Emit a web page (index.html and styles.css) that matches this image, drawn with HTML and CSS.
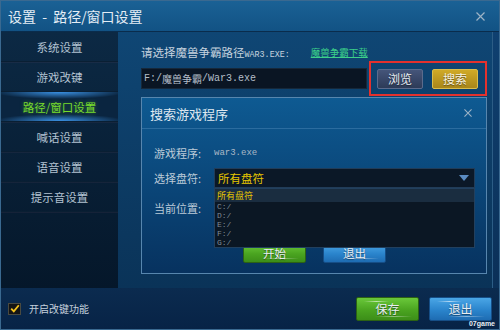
FILE: index.html
```html
<!DOCTYPE html>
<html lang="zh-CN">
<head>
<meta charset="utf-8">
<title>设置 - 路径/窗口设置</title>
<link rel="stylesheet" href="styles.css">
</head>
<body>
<div class="window">
  <header class="titlebar">
    <span class="title">设置 - 路径/窗口设置</span>
    <svg class="close" width="9" height="9" viewBox="0 0 9 9"><path d="M0.5 0.5L8.5 8.5M8.5 0.5L0.5 8.5"/></svg>
  </header>
  <div class="content">
    <nav class="sidebar">
      <div class="nav-item">系统设置</div>
      <div class="nav-item">游戏改键</div>
      <div class="nav-item active">路径/窗口设置</div>
      <div class="nav-item">喊话设置</div>
      <div class="nav-item">语音设置</div>
      <div class="nav-item">提示音设置</div>
    </nav>
    <main class="main">
      <div class="path-label">
        <span>请选择魔兽争霸路径<span class="mono">WAR3.EXE:</span></span>
        <a class="link">魔兽争霸下载</a>
      </div>
      <div class="path-row">
        <div class="path-input"><span class="mono">F:/</span>魔兽争霸<span class="mono">/War3.exe</span></div>
        <div class="highlight">
          <button class="btn btn-slate">浏览</button>
          <button class="btn btn-gold">搜索</button>
        </div>
      </div>
      <section class="dialog">
        <div class="dialog-head">
          <span class="dialog-title">搜索游戏程序</span>
          <svg class="close small" width="9" height="9" viewBox="0 0 9 9"><path d="M0.5 0.5L8.5 8.5M8.5 0.5L0.5 8.5"/></svg>
        </div>
        <div class="dialog-body">
          <div class="field">
            <span class="field-label">游戏程序:</span>
            <span class="mono value">war3.exe</span>
          </div>
          <div class="field gap-small">
            <span class="field-label">选择盘符:</span>
            <div class="select">
              <span class="select-text">所有盘符</span>
              <svg class="caret" width="10" height="6" viewBox="0 0 10 6"><path d="M0 0H10L5 6Z"/></svg>
              <ul class="dropdown">
                <li class="opt selected">所有盘符</li>
                <li class="opt">C:/</li>
                <li class="opt">D:/</li>
                <li class="opt">E:/</li>
                <li class="opt">F:/</li>
                <li class="opt">G:/</li>
              </ul>
            </div>
          </div>
          <div class="field gap-mid">
            <span class="field-label">当前位置:</span>
          </div>
          <div class="dialog-actions">
            <button class="btn btn-green btn-sm">开始</button>
            <button class="btn btn-blue btn-sm">退出</button>
          </div>
        </div>
      </section>
    </main>
    <div class="edge"></div>
  </div>
  <footer class="footer">
    <label class="check">
      <span class="box"><svg width="10" height="9" viewBox="0 0 10 9"><path d="M1.2 4.6L3.8 7.4L8.8 1.2"/></svg></span>
      <span class="check-text">开启改键功能</span>
    </label>
    <div class="footer-actions">
      <button class="btn btn-green btn-lg">保存</button>
      <button class="btn btn-blue btn-lg">退出</button>
    </div>
  </footer>
  <span class="watermark">07game</span>
</div>
</body>
</html>
```

FILE: styles.css
```css
* { box-sizing: border-box; margin: 0; padding: 0; }
html, body { width: 500px; height: 330px; overflow: hidden; background: #0a2a4c; }
body { font-family: "Noto Sans CJK SC", "Noto Sans", sans-serif; color: #c4d2df; }

.mono { font-family: "Liberation Mono", "DejaVu Sans Mono", monospace; }

.window {
  width: 500px; height: 330px;
  display: flex; flex-direction: column;
  border: 1px solid #3a6990;
  background: #0b2e52;
  position: relative;
}

/* title bar */
.titlebar {
  height: 31px; flex: none;
  display: flex; align-items: center; justify-content: space-between;
  padding: 0 14px 0 7px;
  background: linear-gradient(#1a6195, #125284);
  border-bottom: 1px solid #0a2c4c;
}
.title { font-size: 14px; color: #e4edf5; line-height: 1; word-spacing: 3px; }
.close path { stroke: #9db3c6; stroke-width: 1.2; fill: none; }

/* content */
.content { height: 256px; flex: none; display: flex; }

.sidebar {
  width: 117px; flex: none;
  background: linear-gradient(#0c2944, #05172a);
}
.nav-item {
  height: 30px;
  display: flex; align-items: center; justify-content: center;
  font-size: 11.5px; color: #b3c3d2;
  border-bottom: 1px solid #0a1f33;
  box-shadow: 0 1px 0 rgba(120, 80, 110, 0.12);
}
.nav-item.active {
  color: #78dc2c;
  text-shadow: 0 0 4px rgba(110, 220, 40, 0.45);
  background:
    radial-gradient(55% 7px at 50% 0, rgba(60, 150, 235, 0.95), rgba(60, 150, 235, 0) 100%),
    radial-gradient(55% 7px at 50% 100%, rgba(60, 150, 235, 0.95), rgba(60, 150, 235, 0) 100%),
    #0a2540;
}

.main {
  flex: 1;
  display: flex; flex-direction: column;
  padding: 12px 5px 14px 23px;
  background: linear-gradient(#0f4674, #0a3358);
  border-right: 1px solid #2c5d86;
}
.edge { width: 6px; flex: none; background: linear-gradient(#0f4070, #0b3058); }

.path-label {
  height: 16px; display: flex; align-items: center;
  font-size: 11.5px; color: #c6d3df;
}
.path-label .mono { font-size: 8.4px; }
.link {
  margin-left: 21px;
  font-size: 9.5px; color: #3cd08a;
  text-decoration: underline;
}

.path-row { margin-top: 1px; height: 35px; display: flex; align-items: center; }
.path-input {
  width: 226px; height: 21px;
  background: #0a1523;
  border: 1px solid #16283a;
  display: flex; align-items: center;
  padding-left: 2px;
  font-size: 10px; color: #b4bec8;
}
.path-input .mono { font-size: 10px; }
.highlight {
  margin-left: 2px;
  width: 118px; height: 35px;
  border: 2px solid #e4312d;
  display: flex; align-items: center; gap: 9px;
  padding-left: 6px;
}

.btn {
  font-family: "Noto Sans CJK SC", sans-serif;
  font-size: 12px; color: #e8eef4;
  border: 1px solid transparent;
  border-radius: 2px;
  display: flex; align-items: center; justify-content: center;
  position: relative;
  text-shadow: 0 1px 1px rgba(0, 0, 0, 0.45);
}
.btn-slate {
  width: 46px; height: 20px;
  background: linear-gradient(#45557a, #2d3b58);
  border-color: #5b6b8c;
}
.btn-gold {
  width: 46px; height: 20px;
  background: linear-gradient(#d0aa26, #a8861a);
  border-color: #d8bc4c;
  color: #f6f2e2;
}
.btn-green {
  background: linear-gradient(#6ac83a, #4aa420 55%, #3c8e18);
  border-color: #2c6214;
}
.btn-blue {
  background: linear-gradient(#4aa6e6, #2a84cc 55%, #1e6cb2);
  border-color: #164e86;
}
.btn-green::before, .btn-blue::before {
  content: ""; position: absolute;
  top: 3px; left: 12%; width: 40%; height: 1px;
  background: linear-gradient(90deg, rgba(255,255,255,0), rgba(255,255,255,0.6), rgba(255,255,255,0));
}
.btn-green::after, .btn-blue::after {
  content: ""; position: absolute;
  bottom: 3px; left: 30%; width: 60%; height: 1px;
  background: linear-gradient(90deg, rgba(255,255,255,0), rgba(255,255,255,0.45), rgba(255,255,255,0));
}
.btn-sm { width: 63px; height: 20px; font-size: 11.5px; }
.btn-lg { width: 63px; height: 24px; font-size: 12px; }

/* dialog */
.dialog {
  margin-top: 1px;
  flex: 1;
  border: 1px solid #5786ae;
  background: linear-gradient(#0e5a92, #0a4476 55%, #07325f);
  display: flex; flex-direction: column;
}
.dialog-head {
  height: 31px; flex: none;
  display: flex; align-items: center; justify-content: space-between;
  padding: 0 14px 0 8px;
  border-bottom: 1px solid #2b6c9f;
}
.dialog-title { font-size: 13px; color: #dfe8f0; }
.close.small { width: 8px; height: 8px; }

.dialog-body { padding: 14px 0 0 12px; }
.field { height: 20px; display: flex; align-items: center; }
.gap-small { margin-top: 5px; }
.gap-mid { margin-top: 10px; }
.field-label { width: 60px; flex: none; font-size: 11px; color: #bccbd8; }
.value { font-size: 9px; color: #aab8c6; }

.select {
  width: 261px; height: 20px;
  background: #0b1827;
  border: 1px solid #213c58;
  position: relative;
  display: flex; align-items: center;
  padding-left: 3px;
}
.select-text { font-size: 11.5px; color: #e6c600; }
.caret { position: absolute; right: 5px; top: 6px; }
.caret path { fill: #5a8bc2; }

.dropdown {
  position: absolute; left: -1px; top: 19px;
  width: 261px; height: 60px;
  list-style: none;
  background: #0b1724;
  border: 1px solid #22405e;
  z-index: 2;
  overflow: hidden;
}
.opt {
  height: 9px;
  padding-left: 2px;
  font-family: "Liberation Mono", monospace;
  font-size: 8px; line-height: 9px;
  color: #7f8c98;
  overflow: hidden;
}
.opt.selected {
  height: 13px;
  background: #1a2d40;
  font-family: "Noto Sans CJK SC", sans-serif;
  font-size: 9px; line-height: 13px;
  color: #e6c600;
}

.dialog-actions {
  margin-top: 25px;
  padding-left: 89px;
  display: flex; gap: 17px;
}

/* footer */
.footer {
  flex: 1;
  display: flex; align-items: center; justify-content: space-between;
  padding: 0 7px 0 7px;
  background: linear-gradient(#0b2b4f, #072346);
}
.check { display: flex; align-items: center; gap: 8px; }
.box {
  width: 13px; height: 12px;
  background: #141414;
  border: 1px solid #4a4a40;
  display: flex; align-items: center; justify-content: center;
}
.box path { stroke: #f2c21e; stroke-width: 1.8; fill: none; }
.check-text { font-size: 10px; color: #c4d0dc; }
.footer-actions { display: flex; gap: 10px; }

.watermark {
  position: absolute; right: 4px; bottom: 2px;
  font-family: "Liberation Sans", sans-serif;
  font-size: 7px; font-weight: bold; color: #e8eef4;
  line-height: 7px;
}
```
